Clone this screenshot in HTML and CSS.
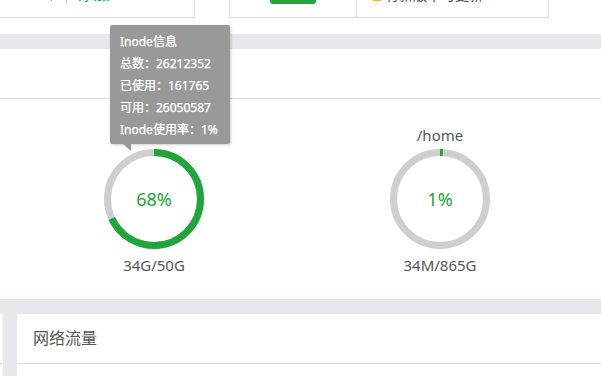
FILE: index.html
```html
<!DOCTYPE html>
<html>
  <head>
    <meta charset="UTF-8" />
    <meta name="viewport" content="width=device-width, initial-scale=1.0" />
    <title>首页 - 磁盘</title>
    <link rel="stylesheet" href="styles.css">
  </head>
  <body>
    <div class="top-strip">
      <div class="stat-card card-a">
        <span class="ok-text">正常</span>
        <span class="sep"></span>
        <span class="link-text">添加</span>
      </div>
      <div class="stat-card card-b">
        <div class="card-cell cell-btn">
          <span class="btn-green">更新</span>
        </div>
        <div class="card-cell cell-msg">
          <span class="warn-dot"></span>
          <span>有新版本可更新</span>
        </div>
      </div>
    </div>

    <div class="panel disk-panel">
      <div class="panel-head"></div>
      <div class="disk-list">
        <div class="disk-item">
          <!-- path is covered by the inode tip -->
          <div class="disk-path">&nbsp;</div>
          <div class="ring">
            <svg width="100" height="100" viewBox="0 0 100 100">
              <circle cx="50" cy="50" r="46.5" class="ring-bg" />
              <circle cx="50" cy="50" r="46.5" class="ring-val" stroke-dasharray="198.7 292.2" />
            </svg>
            <span class="ring-pct">68%</span>
          </div>
          <div class="disk-size">34G/50G</div>
        </div>
        <div class="disk-item">
          <div class="disk-path">/home</div>
          <div class="ring">
            <svg width="100" height="100" viewBox="0 0 100 100">
              <circle cx="50" cy="50" r="46.5" class="ring-bg" />
              <circle cx="50" cy="50" r="46.5" class="ring-val" stroke-dasharray="2.9 292.2" />
            </svg>
            <span class="ring-pct">1%</span>
          </div>
          <div class="disk-size">34M/865G</div>
        </div>
      </div>

      <!-- inode tips for the first disk -->
      <div class="tip">
        <div>Inode信息</div>
        <div>总数：26212352</div>
        <div>已使用：161765</div>
        <div>可用：26050587</div>
        <div>Inode使用率：1%</div>
      </div>
    </div>

    <div class="bottom-row">
      <div class="panel side-panel">
        <div class="panel-head"></div>
      </div>
      <div class="panel net-panel">
        <div class="panel-head">网络流量</div>
      </div>
    </div>
  </body>
</html>
```

FILE: styles.css
```css
body {
  font-family: "Noto Sans", "Noto Sans CJK SC", sans-serif;
  margin: 0;
  background-color: #e7e8ec;
  color: #555;
  overflow: hidden;
}

.top-strip {
  height: 34px;
  box-sizing: border-box;
  padding-bottom: 16px;
  background-color: #fff;
  display: flex;
  align-items: flex-end;
  overflow: hidden;
}

.stat-card {
  height: 60px;
  box-sizing: border-box;
  border: 1px solid #ddd;
  background-color: #fff;
  flex-shrink: 0;
}

.card-a {
  width: 216px;
  margin-left: -21px;
  display: flex;
  align-items: flex-end;
  padding: 0 0 13px 46px;
  font-size: 14px;
  line-height: 20px;
}

.ok-text {
  color: #20a53a;
  font-size: 14px;
  letter-spacing: 4px;
}

.sep {
  width: 1px;
  height: 20px;
  background-color: #ccc;
  margin: 0 11px 0 4px;
}

.link-text {
  color: #20a53a;
  font-size: 16px;
}

.card-b {
  width: 320px;
  margin-left: 34px;
  display: flex;
}

.card-cell {
  display: flex;
  align-items: flex-end;
}

.cell-btn {
  width: 126px;
  border-right: 1px solid #ddd;
  justify-content: center;
  padding-bottom: 13px;
}

.btn-green {
  display: block;
  width: 46px;
  height: 30px;
  border-radius: 3px;
  background-color: #20a53a;
  color: #fff;
  font-size: 13px;
  line-height: 30px;
  text-align: center;
}

.cell-msg {
  padding: 0 0 12px 16px;
  font-size: 14px;
  line-height: 20px;
  color: #444;
  gap: 4px;
}

.warn-dot {
  width: 8px;
  height: 8px;
  margin-bottom: 4px;
  background-color: #f0ad4e;
}

.panel {
  background-color: #fff;
}

.panel-head {
  height: 49px;
  border-bottom: 1px solid #ddd;
  padding-left: 16px;
  font-size: 16px;
  line-height: 49px;
  color: #555;
}

.disk-panel {
  margin-top: 15px;
  position: relative;
}

.disk-list {
  height: 200px;
  box-sizing: border-box;
  display: flex;
  padding: 26px 0 0 11px;
}

.disk-item {
  width: 286px;
  display: flex;
  flex-direction: column;
  align-items: center;
}

.disk-path {
  font-size: 15px;
  line-height: 20px;
  color: #555;
  margin-bottom: 4px;
}

.ring {
  width: 100px;
  height: 100px;
  position: relative;
}

.ring svg {
  display: block;
  transform: rotate(-90deg);
}

.ring-bg {
  fill: none;
  stroke: #cfcfcf;
  stroke-width: 7;
}

.ring-val {
  fill: none;
  stroke: #20a53a;
  stroke-width: 7;
}

.ring-pct {
  position: absolute;
  left: 0;
  right: 0;
  top: 38px;
  text-align: center;
  font-size: 18px;
  line-height: 24px;
  color: #20a53a;
}

.disk-size {
  margin-top: 6px;
  font-size: 15px;
  line-height: 20px;
  color: #555;
}

.tip {
  position: absolute;
  left: 110px;
  top: -24px;
  width: 120px;
  box-sizing: border-box;
  padding: 6px 10px 3px 10px;
  background-color: #999;
  border-radius: 2px;
  box-shadow: 1px 1px 3px rgba(0, 0, 0, 0.2);
  color: #fff;
  font-size: 12px;
  line-height: 22px;
  white-space: nowrap;
  -webkit-text-stroke: 0.25px #fff;
}

.tip::after {
  content: "";
  position: absolute;
  left: 13px;
  bottom: -7px;
  border-top: 7px solid #999;
  border-left: 8px solid transparent;
}

.bottom-row {
  display: flex;
  gap: 14px;
  margin-top: 15px;
  margin-left: -283px;
}

.side-panel {
  width: 286px;
  flex-shrink: 0;
  height: 80px;
}

.net-panel {
  flex: 1;
  height: 80px;
}
```
